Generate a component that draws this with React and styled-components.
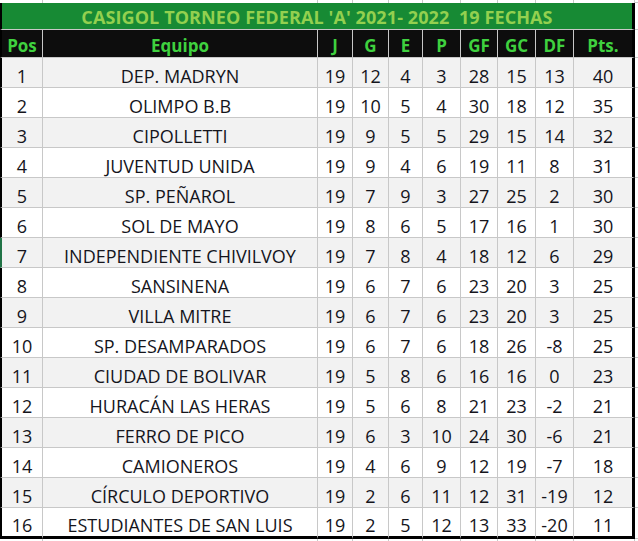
import { Fragment } from 'react';
import styled, { createGlobalStyle } from 'styled-components';

const GlobalStyle = createGlobalStyle`
  body {
    margin: 0;
    background: #ffffff;
    font-family: "Open Sans", "Liberation Sans", sans-serif;
  }
`;

const colors = {
  grid: '#c8c8c8',
  titleBg: '#178a34',
  titleText: '#93d04f',
  headBg: '#0d0d0d',
  headText: '#3fd13f',
  alt: '#f2f2f2',
  text: '#15151c',
};

const headers = ['Pos', 'Equipo', 'J', 'G', 'E', 'P', 'GF', 'GC', 'DF', 'Pts.'];

const rows = [
  [1, 'DEP. MADRYN', 19, 12, 4, 3, 28, 15, 13, 40],
  [2, 'OLIMPO B.B', 19, 10, 5, 4, 30, 18, 12, 35],
  [3, 'CIPOLLETTI', 19, 9, 5, 5, 29, 15, 14, 32],
  [4, 'JUVENTUD UNIDA', 19, 9, 4, 6, 19, 11, 8, 31],
  [5, 'SP. PEÑAROL', 19, 7, 9, 3, 27, 25, 2, 30],
  [6, 'SOL DE MAYO', 19, 8, 6, 5, 17, 16, 1, 30],
  [7, 'INDEPENDIENTE CHIVILVOY', 19, 7, 8, 4, 18, 12, 6, 29],
  [8, 'SANSINENA', 19, 6, 7, 6, 23, 20, 3, 25],
  [9, 'VILLA MITRE', 19, 6, 7, 6, 23, 20, 3, 25],
  [10, 'SP. DESAMPARADOS', 19, 6, 7, 6, 18, 26, -8, 25],
  [11, 'CIUDAD DE BOLIVAR', 19, 5, 8, 6, 16, 16, 0, 23],
  [12, 'HURACÁN LAS HERAS', 19, 5, 6, 8, 21, 23, -2, 21],
  [13, 'FERRO DE PICO', 19, 6, 3, 10, 24, 30, -6, 21],
  [14, 'CAMIONEROS', 19, 4, 6, 9, 12, 19, -7, 18],
  [15, 'CÍRCULO DEPORTIVO', 19, 2, 6, 11, 12, 31, -19, 12],
  [16, 'ESTUDIANTES DE SAN LUIS', 19, 2, 5, 12, 13, 33, -20, 11],
];

const Sheet = styled.div`
  display: grid;
  grid-template-columns: 43px 275px 35px 36px 34px 38px 37px 38px 38px 61px 3px;
  grid-template-rows: 3px 27px 28px repeat(15, 30px) 31px 2px;
  width: 638px;
  height: 541px;
  background: #ffffff;
`;

const Strip = styled.div`
  box-sizing: border-box;
  border-right: 1px solid ${colors.grid};
`;

const Title = styled.div`
  box-sizing: border-box;
  grid-column: 1 / 11;
  display: flex;
  align-items: center;
  justify-content: center;
  padding-top: 2px;
  background: ${colors.titleBg};
  color: ${colors.titleText};
  border-left: 2px solid #000;
  border-right: 3px solid #000;
  border-bottom: 1px solid ${colors.grid};
  font-weight: 700;
  font-size: 18px;
  letter-spacing: 0.1px;
  white-space: pre;
`;

const Head = styled.div`
  box-sizing: border-box;
  display: flex;
  align-items: center;
  justify-content: center;
  padding-top: 4px;
  background: ${colors.headBg};
  color: ${colors.headText};
  font-weight: 700;
  font-size: 17px;
  border-right: ${(p) => (p.$last ? '3px solid #000' : `1px solid ${colors.grid}`)};
  border-left: ${(p) => (p.$first ? '2px solid #000' : 'none')};
  border-bottom: 1px solid ${colors.grid};
`;

const Cell = styled.div`
  box-sizing: border-box;
  display: flex;
  align-items: center;
  justify-content: center;
  padding-top: 6px;
  background: ${(p) => (p.$alt ? colors.alt : '#ffffff')};
  color: ${colors.text};
  font-size: 18px;
  white-space: nowrap;
  border-left: ${(p) =>
    p.$first ? `2px solid ${p.$marked ? '#217346' : '#000'}` : 'none'};
  border-right: ${(p) => (p.$last ? '3px solid #000' : `1px solid ${colors.grid}`)};
  border-bottom: ${(p) => (p.$bottom ? '3px solid #000' : `1px solid ${colors.grid}`)};
`;

const Spacer = styled.div`
  border-bottom: 1px solid ${colors.grid};
`;

export default function App() {
  return (
    <>
      <GlobalStyle />
      <Sheet>
        {headers.map((h) => (
          <Strip key={'s' + h} />
        ))}
        <Spacer />
        <Title>{"CASIGOL TORNEO FEDERAL 'A' 2021- 2022  19 FECHAS"}</Title>
        <Spacer />
        {headers.map((h, i) => (
          <Head key={h} $first={i === 0} $last={i === headers.length - 1}>
            {h}
          </Head>
        ))}
        <Spacer />
        {rows.map((row, r) => (
          <Fragment key={'row' + r}>
            {row.map((v, i) => (
              <Cell
                key={i}
                $alt={r % 2 === 0}
                $first={i === 0}
                $last={i === row.length - 1}
                $bottom={r === rows.length - 1}
                $marked={r === 6}
              >
                {v}
              </Cell>
            ))}
            <Spacer />
          </Fragment>
        ))}
        {headers.map((h) => (
          <Strip key={'b' + h} />
        ))}
      </Sheet>
    </>
  );
}
